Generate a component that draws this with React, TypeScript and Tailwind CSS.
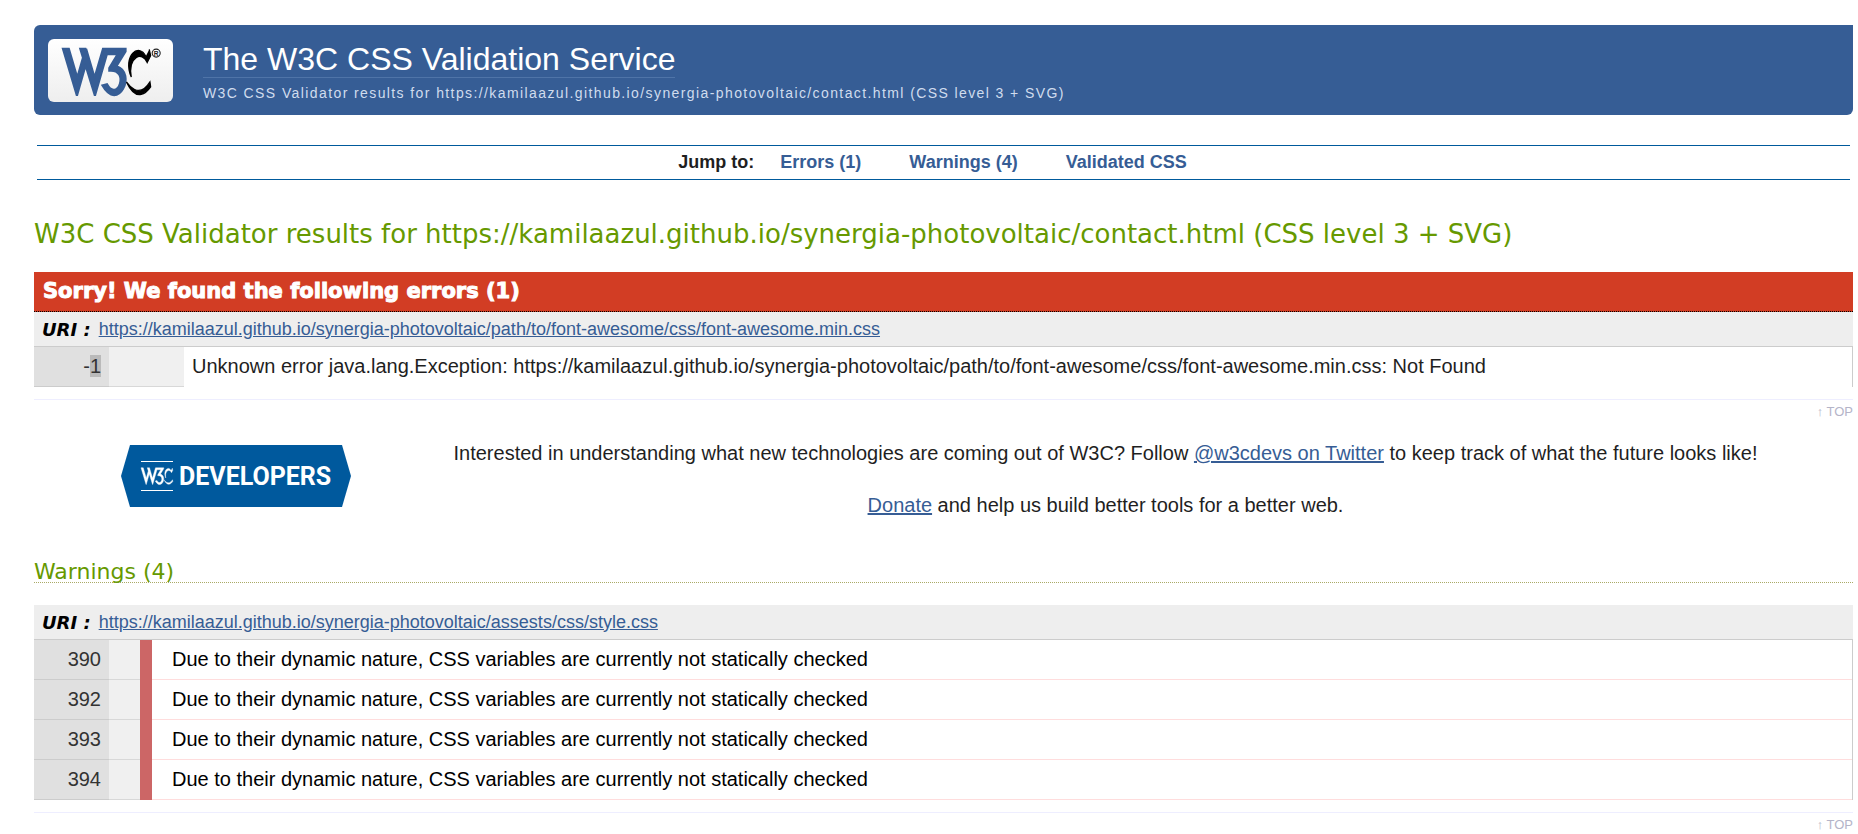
import type { ReactNode } from "react";

const W3_PATH =
  "M36,5l12,41l12-41h33v4l-13,21c30,10,2,69-21,28l7-2c15,27,33,-22,3,-19v-4l12-20h-15l-17,59h-1l-13-42l-12,42h-1l-20-67h9l12,41l8-28l-4-13h9";
const C_PATH =
  "M94,53c15,32,30,14,35,7l-1-7c-16,26-32,3-34,0M122,16c-10-21-34,0-21,30c-5-30 16,-38 23,-21l5-10l-2-9";

function W3CLogo() {
  return (
    <svg viewBox="-19 -9 180 91" className="h-[63px] w-[125px]" role="img" aria-label="W3C">
      <path d={W3_PATH} fill="#365d95" stroke="#365d95" strokeWidth="2.6" />
      <path d={C_PATH} fill="#000" stroke="#000" strokeWidth="1.8" />
      <circle cx="137" cy="11.4" r="5.8" fill="none" stroke="#222" strokeWidth="1.6" />
      <text x="137" y="14.9" fontSize="9.5" fontWeight="bold" textAnchor="middle" fill="#222" className="font-['Liberation_Sans',sans-serif]">
        R
      </text>
    </svg>
  );
}

function DevelopersLogo() {
  return (
    <svg viewBox="0 0 230 62" className="h-[62px] w-[230px] shrink-0" role="img" aria-label="W3C Developers">
      <polygon points="9,0 221,0 230,31 221,62 9,62 0,31" fill="#00599d" />
      <path d="M20 16.5h32M20 45.5h32" stroke="#fff" strokeWidth="1.2" />
      <g transform="translate(19.5 21.5) scale(0.25)" fill="#fff" stroke="#fff" strokeWidth="1.5">
        <path d={W3_PATH} />
        <path d={C_PATH} />
      </g>
      <text x="58" y="40" fontSize="25" fontWeight="bold" fill="#fff" className="font-[Roboto,sans-serif]">
        DEVELOPERS
      </text>
    </svg>
  );
}

function UriHeading({ href }: { href: string }) {
  return (
    <h4 className="flex h-[34px] items-center gap-2 bg-[#eee] px-2">
      <span className="font-['DejaVu_Sans',sans-serif] text-[18px] font-bold italic text-black">URI :</span>
      <a href={href} className="text-[18px] text-[#365d95] underline">
        {href}
      </a>
    </h4>
  );
}

function TopLink() {
  return (
    <div className="mt-3 flex justify-end border-t border-[#eeeeff]">
      <a href="#top" className="text-[13px] leading-6 text-[#b4b4c8]">
        ↑ TOP
      </a>
    </div>
  );
}

function LineCell({ children }: { children: ReactNode }) {
  return (
    <td className="h-10 w-[75px] border-b border-[#ccc] bg-[#e0e0e0] pr-2 pb-0.5 text-right text-[#333]">{children}</td>
  );
}

const warningLines = [390, 392, 393, 394];

export default function App() {
  return (
    <div id="top" className="bg-white pt-[25px] pr-[5px] pl-[34px] font-['Liberation_Sans',Arial,sans-serif] text-[20px] text-[#1f1f1f]">
      <header className="flex items-center gap-[30px] rounded-md rounded-tr-none bg-[#365d95] pt-[14px] pr-[13px] pb-[13px] pl-[14px]">
        <div className="rounded-md bg-linear-to-b from-white to-[#eee]">
          <W3CLogo />
        </div>
        <div className="flex flex-col items-start">
          <h1 className="border-b border-[#4f74a8] text-[32px] leading-9 text-white">The W3C CSS Validation Service</h1>
          <p className="mt-2 text-[14px] leading-[14px] tracking-widest text-[#d0dcee]">
            W3C CSS Validator results for https://kamilaazul.github.io/synergia-photovoltaic/contact.html (CSS level 3 + SVG)
          </p>
        </div>
      </header>

      <nav className="mx-[3px] mt-[30px] flex h-[35px] items-center justify-center border-y border-[#005a9c] pr-[22px] text-[18px] font-bold">
        <span>Jump to:</span>
        <a href="#errors" className="ml-[26px] text-[#365d95]">Errors (1)</a>
        <a href="#warnings" className="ml-12 text-[#365d95]">Warnings (4)</a>
        <a href="#css" className="ml-12 text-[#365d95]">Validated CSS</a>
      </nav>

      <main>
        <h2 className="mt-[38px] mb-[22px] font-['DejaVu_Sans',sans-serif] text-[26px] leading-8 text-[#690]">
          W3C CSS Validator results for https://kamilaazul.github.io/synergia-photovoltaic/contact.html (CSS level 3 + SVG)
        </h2>

        <section id="errors">
          <h3 className="h-10 border-b border-dotted border-black bg-[#d23d24] pl-[9px] font-['DejaVu_Sans',sans-serif] text-[21px] leading-[39px] font-bold text-white [-webkit-text-stroke:1px_#fff]">
            Sorry! We found the following errors (1)
          </h3>
          <UriHeading href="https://kamilaazul.github.io/synergia-photovoltaic/path/to/font-awesome/css/font-awesome.min.css" />
          <table className="w-full border-separate border-spacing-0 border-t border-r border-[#ccc]">
            <tbody>
              <tr>
                <LineCell>
                  -<span className="bg-[#bababa]">1</span>
                </LineCell>
                <td className="w-[75px] border-b border-[#d8d8d8] bg-[#f0f0f0]" />
                <td className="pb-0.5 pl-2">
                  Unknown error java.lang.Exception: https://kamilaazul.github.io/synergia-photovoltaic/path/to/font-awesome/css/font-awesome.min.css: Not Found
                </td>
              </tr>
            </tbody>
          </table>
          <TopLink />
        </section>

        <section className="mt-[21px] flex items-start pl-[87px]">
          <DevelopersLogo />
          <div className="flex-1 pl-[7px] text-center leading-[26px]">
            <p className="-mt-[5px]">
              Interested in understanding what new technologies are coming out of W3C? Follow{" "}
              <a href="#twitter" className="text-[#365d95] underline">@w3cdevs on Twitter</a> to keep track of what the future looks like!
            </p>
            <p className="mt-[26px]">
              <a href="#donate" className="text-[#365d95] underline">Donate</a> and help us build better tools for a better web.
            </p>
          </div>
        </section>

        <section id="warnings">
          <h3 className="mt-11 mb-[22px] border-b border-dotted border-[#aa6] font-['DejaVu_Sans',sans-serif] text-[22px] leading-5 text-[#690]">
            Warnings (4)
          </h3>
          <UriHeading href="https://kamilaazul.github.io/synergia-photovoltaic/assests/css/style.css" />
          <table className="w-full border-separate border-spacing-0 border-t border-r border-[#ccc] text-black">
            <tbody>
              {warningLines.map((line) => (
                <tr key={line}>
                  <LineCell>{line}</LineCell>
                  <td className="w-[31px] border-b border-[#d8d8d8] bg-[#f0f0f0]" />
                  <td className="w-3 bg-[#c66]" />
                  <td className="border-b border-[#fdd] pb-0.5 pl-5">
                    Due to their dynamic nature, CSS variables are currently not statically checked
                  </td>
                </tr>
              ))}
            </tbody>
          </table>
          <TopLink />
        </section>
      </main>
    </div>
  );
}
